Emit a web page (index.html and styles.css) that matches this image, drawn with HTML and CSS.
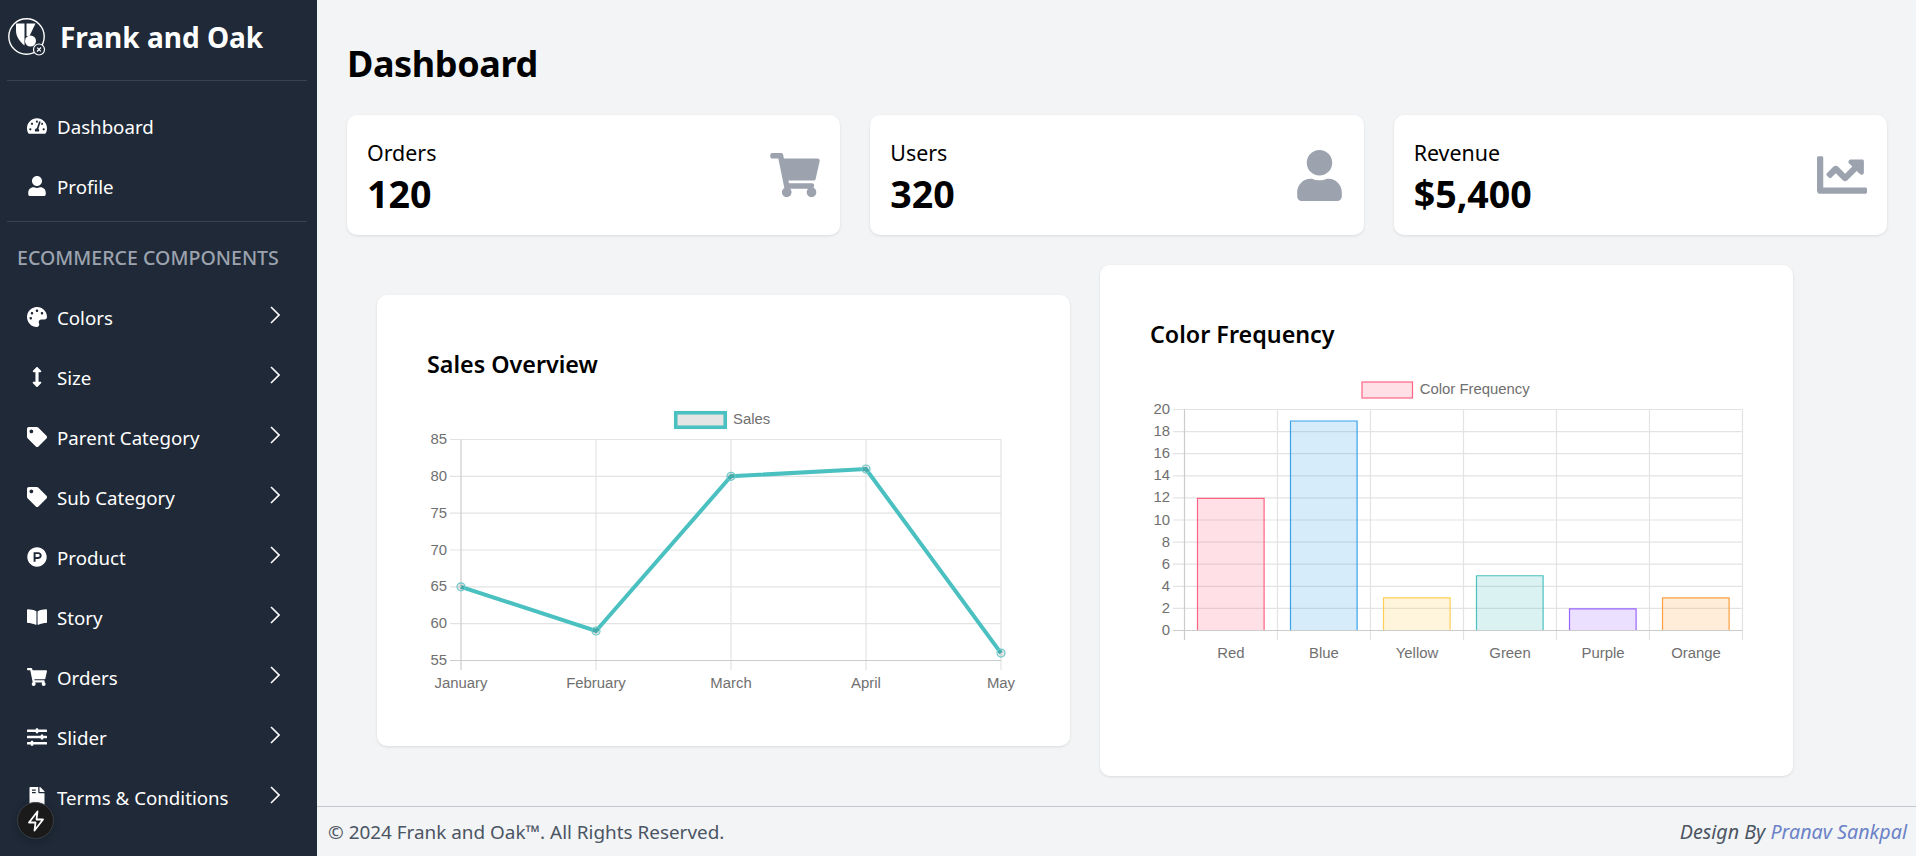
FILE: index.html
```html
<!DOCTYPE html>
<html lang="en">
<head>
    <meta charset="UTF-8">
    <meta name="viewport" content="width=device-width, initial-scale=1.0">
    <title>Frank and Oak Dashboard</title>
    <link rel="stylesheet" href="styles.css">
</head>
<body>
    <aside class="sidebar">
        <div class="brand">
            <svg class="brand-logo" viewBox="0 0 40 40">
                <circle cx="18.500" cy="19.500" r="17.700" fill="none" stroke="#fff" stroke-width="1.4"/>
                <path d="M8 6.500h8.500v22c-5-4-8.500-9-8.500-15z" fill="#fff"/>
                <path d="M18.500 6.500h9l-6 12.500h-3z" fill="#fff"/>
                <circle cx="22.500" cy="24" r="5.500" fill="#fff"/>
                <circle cx="31" cy="32.500" r="5.500" fill="#1f2937" stroke="#fff" stroke-width="1.200"/>
                <path d="M29 34.500l4-4M29.200 30.700l3.600 3.600" stroke="#fff" stroke-width="1.200"/>
            </svg>
            <span class="brand-name">Frank and Oak</span>
        </div>
        <hr class="side-rule">
        <nav class="nav-top">
            <a class="nav-item">
                <span class="nav-icon"><svg viewBox="0 0 576 512"><path d="M288 32C128.94 32 0 160.94 0 320c0 52.8 14.25 102.26 39.06 144.8 5.61 9.62 16.3 15.2 27.44 15.2h443c11.14 0 21.83-5.58 27.44-15.2C561.75 422.26 576 372.8 576 320c0-159.06-128.94-288-288-288zm0 64c14.71 0 26.58 10.13 30.32 23.65-1.11 2.26-2.64 4.23-3.45 6.67l-9.22 27.67c-5.13 3.49-10.97 6.01-17.64 6.01-17.67 0-32-14.33-32-32S270.33 96 288 96zM96 384c-17.67 0-32-14.33-32-32s14.33-32 32-32 32 14.33 32 32-14.33 32-32 32zm48-160c-17.67 0-32-14.33-32-32s14.33-32 32-32 32 14.33 32 32-14.33 32-32 32zm246.77-72.41l-61.33 184C343.13 347.33 352 364.54 352 384c0 11.72-3.38 22.55-8.88 32H232.88c-5.5-9.45-8.88-20.28-8.88-32 0-33.94 26.5-61.43 59.9-63.59l61.34-184.01c4.17-12.56 17.73-19.45 30.36-15.17 12.57 4.19 19.35 17.77 15.17 30.36zm14.66 57.2l15.52-46.55c3.47-1.29 7.13-2.23 11.05-2.23 17.67 0 32 14.33 32 32s-14.33 32-32 32c-11.38-.01-20.89-6.28-26.57-15.22zM480 384c-17.67 0-32-14.33-32-32s14.33-32 32-32 32 14.33 32 32-14.33 32-32 32z"/></svg></span>
                Dashboard
            </a>
            <a class="nav-item">
                <span class="nav-icon"><svg viewBox="0 0 448 512"><path d="M224 256c70.7 0 128-57.3 128-128S294.7 0 224 0 96 57.3 96 128s57.3 128 128 128zm89.6 32h-16.7c-22.2 10.2-46.9 16-72.9 16s-50.6-5.8-72.9-16h-16.7C60.2 288 0 348.2 0 422.4V464c0 26.5 21.5 48 48 48h352c26.5 0 48-21.5 48-48v-41.6c0-74.2-60.2-134.4-134.4-134.4z"/></svg></span>
                Profile
            </a>
        </nav>
        <hr class="side-rule">
        <div class="nav-heading">ECOMMERCE COMPONENTS</div>
        <nav>
            <a class="nav-item">
                <span class="nav-icon"><svg viewBox="0 0 512 512"><path d="M204.3 5C104.9 24.4 24.8 104.3 5.2 203.4c-37 187 131.7 326.4 258.8 306.7 41.2-6.4 61.4-54.6 42.5-91.7-23.1-45.4 9.9-98.4 60.9-98.4h79.7c35.8 0 64.8-29.6 64.9-65.3C511.5 97.1 368.1-26.9 204.3 5zM96 320c-17.7 0-32-14.3-32-32s14.3-32 32-32 32 14.3 32 32-14.3 32-32 32zm32-128c-17.7 0-32-14.3-32-32s14.3-32 32-32 32 14.3 32 32-14.3 32-32 32zm128-64c-17.7 0-32-14.3-32-32s14.3-32 32-32 32 14.3 32 32-14.3 32-32 32zm128 64c-17.7 0-32-14.3-32-32s14.3-32 32-32 32 14.3 32 32-14.3 32-32 32z"/></svg></span>
                Colors
                <svg class="nav-chevron" viewBox="0 0 10 18"><path d="M1 1l8 8-8 8"/></svg>
            </a>
            <a class="nav-item">
                <span class="nav-icon"><svg viewBox="0 0 256 512"><path d="M214.059 377.941H168V134.059h46.059c21.382 0 32.09-25.851 16.971-40.971L144.971 7.029c-9.373-9.373-24.568-9.373-33.941 0L24.971 93.088c-15.119 15.119-4.411 40.971 16.971 40.971H88v243.882H41.941c-21.382 0-32.09 25.851-16.971 40.971l86.059 86.059c9.373 9.373 24.568 9.373 33.941 0l86.059-86.059c15.12-15.119 4.412-40.971-16.97-40.971z"/></svg></span>
                Size
                <svg class="nav-chevron" viewBox="0 0 10 18"><path d="M1 1l8 8-8 8"/></svg>
            </a>
            <a class="nav-item">
                <span class="nav-icon"><svg viewBox="0 0 512 512"><path d="M0 252.118V48C0 21.49 21.49 0 48 0h204.118a48 48 0 0 1 33.941 14.059l211.882 211.882c18.745 18.745 18.745 49.137 0 67.882L293.823 497.941c-18.745 18.745-49.137 18.745-67.882 0L14.059 286.059A48 48 0 0 1 0 252.118zM112 64c-26.51 0-48 21.49-48 48s21.49 48 48 48 48-21.49 48-48-21.49-48-48-48z"/></svg></span>
                Parent Category
                <svg class="nav-chevron" viewBox="0 0 10 18"><path d="M1 1l8 8-8 8"/></svg>
            </a>
            <a class="nav-item">
                <span class="nav-icon"><svg viewBox="0 0 512 512"><path d="M0 252.118V48C0 21.49 21.49 0 48 0h204.118a48 48 0 0 1 33.941 14.059l211.882 211.882c18.745 18.745 18.745 49.137 0 67.882L293.823 497.941c-18.745 18.745-49.137 18.745-67.882 0L14.059 286.059A48 48 0 0 1 0 252.118zM112 64c-26.51 0-48 21.49-48 48s21.49 48 48 48 48-21.49 48-48-21.49-48-48-48z"/></svg></span>
                Sub Category
                <svg class="nav-chevron" viewBox="0 0 10 18"><path d="M1 1l8 8-8 8"/></svg>
            </a>
            <a class="nav-item">
                <span class="nav-icon"><svg viewBox="0 0 512 512"><path d="M326.3 218.8c0 20.5-16.7 37.2-37.2 37.2h-70.3v-74.4h70.3c20.5 0 37.2 16.7 37.2 37.2zM504 256c0 137-111 248-248 248S8 393 8 256 119 8 256 8s248 111 248 248zm-128.1-37.2c0-47.9-38.9-86.8-86.8-86.8H169.2v248h49.6v-74.4h70.3c47.9 0 86.8-38.9 86.8-86.8z"/></svg></span>
                Product
                <svg class="nav-chevron" viewBox="0 0 10 18"><path d="M1 1l8 8-8 8"/></svg>
            </a>
            <a class="nav-item">
                <span class="nav-icon"><svg viewBox="0 0 576 512"><path d="M542.22 32.05c-54.8 3.11-163.72 14.43-230.96 55.59-4.64 2.84-7.27 7.89-7.27 13.17v363.87c0 11.55 12.63 18.85 23.28 13.49 69.18-34.82 169.23-44.32 218.7-46.92 16.89-.89 30.02-14.43 30.02-30.66V62.75c.01-17.71-15.35-31.74-33.77-30.7zM264.73 87.64C197.5 46.48 88.58 35.17 33.78 32.05 15.36 31.01 0 45.04 0 62.75V400.6c0 16.24 13.13 29.78 30.02 30.66 49.49 2.6 149.59 12.11 218.77 46.95 10.62 5.35 23.21-1.94 23.21-13.46V100.63c0-5.29-2.62-10.14-7.27-12.99z"/></svg></span>
                Story
                <svg class="nav-chevron" viewBox="0 0 10 18"><path d="M1 1l8 8-8 8"/></svg>
            </a>
            <a class="nav-item">
                <span class="nav-icon"><svg viewBox="0 0 576 512"><path d="M528.12 301.319l47.273-208C578.806 78.301 567.391 64 551.99 64H159.208l-9.166-44.81C147.758 8.021 137.93 0 126.529 0H24C10.745 0 0 10.745 0 24v16c0 13.255 10.745 24 24 24h69.883l70.248 343.435C147.325 417.1 136 435.222 136 456c0 30.928 25.072 56 56 56s56-25.072 56-56c0-15.674-6.447-29.835-16.824-40h209.647C430.447 426.165 424 440.326 424 456c0 30.928 25.072 56 56 56s56-25.072 56-56c0-22.172-12.888-41.332-31.579-50.405l5.517-24.276c3.413-15.018-8.002-29.319-23.403-29.319H218.117l-6.545-32h293.145c11.206 0 20.92-7.754 23.403-18.681z"/></svg></span>
                Orders
                <svg class="nav-chevron" viewBox="0 0 10 18"><path d="M1 1l8 8-8 8"/></svg>
            </a>
            <a class="nav-item">
                <span class="nav-icon"><svg viewBox="0 0 512 512"><path d="M496 384H160v-16c0-8.8-7.2-16-16-16h-32c-8.8 0-16 7.2-16 16v16H16c-8.8 0-16 7.2-16 16v32c0 8.8 7.2 16 16 16h80v16c0 8.8 7.2 16 16 16h32c8.8 0 16-7.2 16-16v-16h336c8.8 0 16-7.2 16-16v-32c0-8.8-7.2-16-16-16zm0-160h-80v-16c0-8.8-7.2-16-16-16h-32c-8.8 0-16 7.2-16 16v16H16c-8.8 0-16 7.2-16 16v32c0 8.8 7.2 16 16 16h336v16c0 8.8 7.2 16 16 16h32c8.8 0 16-7.2 16-16v-16h80c8.8 0 16-7.2 16-16v-32c0-8.8-7.2-16-16-16zm0-160H288V48c0-8.8-7.2-16-16-16h-32c-8.8 0-16 7.2-16 16v16H16C7.2 64 0 71.2 0 80v32c0 8.8 7.2 16 16 16h208v16c0 8.8 7.2 16 16 16h32c8.8 0 16-7.2 16-16v-16h208c8.8 0 16-7.2 16-16V80c0-8.8-7.2-16-16-16z"/></svg></span>
                Slider
                <svg class="nav-chevron" viewBox="0 0 10 18"><path d="M1 1l8 8-8 8"/></svg>
            </a>
            <a class="nav-item">
                <span class="nav-icon"><svg viewBox="0 0 384 512"><path d="M224 136V0H24C10.7 0 0 10.7 0 24v464c0 13.3 10.7 24 24 24h336c13.3 0 24-10.7 24-24V160H248c-13.2 0-24-10.8-24-24zM64 72c0-4.42 3.58-8 8-8h80c4.42 0 8 3.58 8 8v16c0 4.42-3.58 8-8 8H72c-4.42 0-8-3.58-8-8V72zm0 64c0-4.42 3.58-8 8-8h80c4.42 0 8 3.58 8 8v16c0 4.42-3.58 8-8 8H72c-4.42 0-8-3.58-8-8v-16zM377 105L279.1 7c-4.5-4.5-10.6-7-17-7H256v128h128v-6.1c0-6.3-2.5-12.4-7-16.9z"/></svg></span>
                Terms &amp; Conditions
                <svg class="nav-chevron" viewBox="0 0 10 18"><path d="M1 1l8 8-8 8"/></svg>
            </a>
        </nav>
    </aside>

    <div class="main">
        <main class="content">
            <h1 class="page-title">Dashboard</h1>

            <section class="stats">
                <div class="stat-card">
                    <div>
                        <div class="stat-label">Orders</div>
                        <div class="stat-value">120</div>
                    </div>
                    <svg class="stat-icon icon-cart" viewBox="0 0 576 512"><path d="M528.12 301.319l47.273-208C578.806 78.301 567.391 64 551.99 64H159.208l-9.166-44.81C147.758 8.021 137.93 0 126.529 0H24C10.745 0 0 10.745 0 24v16c0 13.255 10.745 24 24 24h69.883l70.248 343.435C147.325 417.1 136 435.222 136 456c0 30.928 25.072 56 56 56s56-25.072 56-56c0-15.674-6.447-29.835-16.824-40h209.647C430.447 426.165 424 440.326 424 456c0 30.928 25.072 56 56 56s56-25.072 56-56c0-22.172-12.888-41.332-31.579-50.405l5.517-24.276c3.413-15.018-8.002-29.319-23.403-29.319H218.117l-6.545-32h293.145c11.206 0 20.92-7.754 23.403-18.681z"/></svg>
                </div>
                <div class="stat-card">
                    <div>
                        <div class="stat-label">Users</div>
                        <div class="stat-value">320</div>
                    </div>
                    <svg class="stat-icon icon-user" viewBox="0 0 448 512"><path d="M224 256c70.7 0 128-57.3 128-128S294.7 0 224 0 96 57.3 96 128s57.3 128 128 128zm89.6 32h-16.7c-22.2 10.2-46.9 16-72.9 16s-50.6-5.8-72.9-16h-16.7C60.2 288 0 348.2 0 422.4V464c0 26.5 21.5 48 48 48h352c26.5 0 48-21.5 48-48v-41.6c0-74.2-60.2-134.4-134.4-134.4z"/></svg>
                </div>
                <div class="stat-card">
                    <div>
                        <div class="stat-label">Revenue</div>
                        <div class="stat-value">$5,400</div>
                    </div>
                    <svg class="stat-icon icon-chart" viewBox="0 0 512 512"><path d="M496 384H64V80c0-8.84-7.16-16-16-16H16C7.16 64 0 71.16 0 80v336c0 17.67 14.33 32 32 32h464c8.84 0 16-7.16 16-16v-32c0-8.84-7.16-16-16-16zM464 96H345.94c-21.38 0-32.09 25.85-16.97 40.97l32.4 32.4L288 242.75l-73.37-73.37c-12.5-12.5-32.76-12.5-45.25 0l-68.69 68.69c-6.25 6.25-6.25 16.38 0 22.63l22.62 22.62c6.25 6.25 16.38 6.25 22.63 0L192 237.25l73.37 73.37c12.5 12.5 32.76 12.5 45.25 0l96-96 32.4 32.4c15.12 15.12 40.97 4.41 40.97-16.97V112c.01-8.84-7.15-16-15.99-16z"/></svg>
                </div>
            </section>

            <section class="charts">
                <div class="chart-card">
                    <h2 class="chart-title">Sales Overview</h2>
                    <svg class="chart chart-sales" viewBox="0 0 593 301">
                        <rect x="248.75" y="17.75" width="49.5" height="14.5" fill="#e5e5e5" stroke="#4bc0c0" stroke-width="3.6"/>
                        <text x="306" y="29">Sales</text>

                        <path class="grid" d="M23 44.5H574M23 81.3H574M23 118.2H574M23 155H574M23 191.8H574M23 228.7H574M169 44.5V275M304 44.5V275M439 44.5V275M574 44.5V275"/>
                        <path class="axis" d="M23 265.5H574M34 44.5V275"/>

                        <g class="y-labels">
                            <text x="20" y="49">85</text>
                            <text x="20" y="85.8">80</text>
                            <text x="20" y="122.700">75</text>
                            <text x="20" y="159.500">70</text>
                            <text x="20" y="196.300">65</text>
                            <text x="20" y="233.200">60</text>
                            <text x="20" y="270">55</text>
                        </g>
                        <g class="x-labels">
                            <text x="34" y="293">January</text>
                            <text x="169" y="293">February</text>
                            <text x="304" y="293">March</text>
                            <text x="439" y="293">April</text>
                            <text x="574" y="293">May</text>
                        </g>

                        <polyline points="34,191.8 169,236 304,81.3 439,74 574,258.1" fill="none" stroke="#4bc0c0" stroke-width="4"/>
                        <g class="points">
                            <circle cx="34" cy="191.8" r="4"/>
                            <circle cx="169" cy="236" r="4"/>
                            <circle cx="304" cy="81.3" r="4"/>
                            <circle cx="439" cy="74" r="4"/>
                            <circle cx="574" cy="258.1" r="4"/>
                        </g>
                    </svg>
                </div>

                <div class="chart-card">
                    <h2 class="chart-title">Color Frequency</h2>
                    <svg class="chart chart-colors" viewBox="0 0 593 361">
                        <rect x="212" y="17" width="50.5" height="16" fill="#ffe0e6" stroke="#ff6384" stroke-width="1.2"/>
                        <text x="269.7" y="29">Color Frequency</text>

                        <path class="grid" d="M23 44.5H592.5M23 66.6H592.5M23 88.7H592.5M23 110.8H592.5M23 132.9H592.5M23 155H592.5M23 177.1H592.5M23 199.2H592.5M23 221.3H592.5M23 243.4H592.5M127.5 44.5V275M220.5 44.5V275M313.5 44.5V275M406.5 44.5V275M499.5 44.5V275M592.5 44.5V275"/>

                        <rect x="47.5" y="133.4" width="66.6" height="132.1" fill="rgba(255,99,132,.2)"/>
                        <path d="M47.5 265.5V133.4H114.1V265.5" fill="none" stroke="#ff6384" stroke-width="1.2"/>
                        <rect x="140.5" y="56" width="66.6" height="209.5" fill="rgba(54,162,235,.2)"/>
                        <path d="M140.5 265.5V56H207.1V265.5" fill="none" stroke="#36a2eb" stroke-width="1.2"/>
                        <rect x="233.5" y="232.85" width="66.6" height="32.65" fill="rgba(255,206,86,.2)"/>
                        <path d="M233.5 265.5V232.85H300.1V265.5" fill="none" stroke="#ffce56" stroke-width="1.2"/>
                        <rect x="326.5" y="210.75" width="66.6" height="54.75" fill="rgba(75,192,192,.2)"/>
                        <path d="M326.5 265.5V210.75H393.1V265.5" fill="none" stroke="#4bc0c0" stroke-width="1.2"/>
                        <rect x="419.5" y="243.9" width="66.6" height="21.6" fill="rgba(153,102,255,.2)"/>
                        <path d="M419.5 265.5V243.9H486.1V265.5" fill="none" stroke="#9966ff" stroke-width="1.2"/>
                        <rect x="512.5" y="232.85" width="66.6" height="32.65" fill="rgba(255,159,64,.2)"/>
                        <path d="M512.5 265.5V232.85H579.1V265.5" fill="none" stroke="#ff9f40" stroke-width="1.2"/>

                        <path class="axis" d="M23 265.5H592.5M34.5 44.5V275"/>

                        <g class="y-labels">
                            <text x="20" y="49">20</text>
                            <text x="20" y="71.1">18</text>
                            <text x="20" y="93.2">16</text>
                            <text x="20" y="115.3">14</text>
                            <text x="20" y="137.4">12</text>
                            <text x="20" y="159.500">10</text>
                            <text x="20" y="181.6">8</text>
                            <text x="20" y="203.7">6</text>
                            <text x="20" y="225.8">4</text>
                            <text x="20" y="247.9">2</text>
                            <text x="20" y="270">0</text>
                        </g>
                        <g class="x-labels">
                            <text x="81" y="293">Red</text>
                            <text x="174" y="293">Blue</text>
                            <text x="267" y="293">Yellow</text>
                            <text x="360" y="293">Green</text>
                            <text x="453" y="293">Purple</text>
                            <text x="546" y="293">Orange</text>
                        </g>
                    </svg>
                </div>
            </section>
        </main>

        <footer class="footer">
            <span>© 2024 Frank and Oak™. All Rights Reserved.</span>
            <span class="credit">Design By <a class="credit-link">Pranav Sankpal</a></span>
        </footer>
    </div>

    <div class="dev-badge">
        <svg viewBox="0 0 24 24"><path d="M13.5 2.5L5 13.5h6.5l-1 8 8.500-11H12.500z"/></svg>
    </div>
</body>
</html>
```

FILE: styles.css
```css
* {
    box-sizing: border-box;
}
html, body {
    height: 100%;
}
body {
    margin: 0;
    display: flex;
    overflow: hidden;
    background-color: #f3f4f6;
    color: #000;
    font-family: "Noto Sans", "Open Sans", sans-serif;
}

/* sidebar */
.sidebar {
    width: 317px;
    flex-shrink: 0;
    height: 100vh;
    overflow: hidden;
    background-color: #1f2937;
    color: #fff;
}
.brand {
    height: 80px;
    display: flex;
    align-items: center;
    padding: 0 0 7px 8px;
}
.brand-logo {
    width: 40px;
    height: 40px;
    margin-right: 12px;
}
.brand-name {
    font-size: 28px;
    font-weight: 700;
}
.side-rule {
    margin: 0 10px 0 7px;
    border: 0;
    border-top: 1px solid #374151;
}
.nav-top {
    padding-top: 16px;
    padding-bottom: 4px;
}
.nav-heading {
    height: 66px;
    padding-left: 17px;
    line-height: 72px;
    font-size: 19.6px;
    font-weight: 500;
    color: #9ca3af;
    white-space: nowrap;
}
.nav-item {
    position: relative;
    display: flex;
    align-items: center;
    height: 60px;
    padding: 0 0 2px 27px;
    font-size: 18.7px;
    white-space: nowrap;
}
.nav-icon {
    width: 20px;
    height: 20px;
    margin-right: 10px;
    display: flex;
    align-items: center;
    justify-content: center;
}
.nav-icon svg {
    width: 20px;
    height: 20px;
    fill: #fff;
}
.nav-chevron {
    position: absolute;
    left: 270px;
    top: 18px;
    width: 10px;
    height: 18px;
    fill: none;
    stroke: #fff;
    stroke-width: 1.6;
}

/* main column */
.main {
    flex: 1;
    min-width: 0;
    height: 100vh;
    display: flex;
    flex-direction: column;
}
.content {
    flex: 1;
    min-height: 0;
    padding: 30px 29px 0 30px;
}
.page-title {
    margin: 0 0 17px;
    font-size: 36px;
    line-height: 68px;
    font-weight: 700;
    letter-spacing: -0.4px;
}
.stats {
    display: grid;
    grid-template-columns: repeat(3, 1fr);
    gap: 30px;
}
.stat-card {
    height: 120px;
    padding: 0 20px;
    display: flex;
    align-items: center;
    justify-content: space-between;
    background-color: #fff;
    border-radius: 10px;
    box-shadow: 0 1px 3px rgba(0, 0, 0, 0.1);
}
.stat-label {
    font-size: 21.4px;
    line-height: 30px;
    margin-top: 8px;
}
.stat-value {
    font-size: 37.6px;
    line-height: 52px;
    font-weight: 700;
}
.stat-icon {
    fill: #9ca3af;
}
.icon-cart {
    width: 50px;
    height: 44px;
}
.icon-user {
    width: 45px;
    height: 51px;
    margin-right: 2px;
}
.icon-chart {
    width: 50px;
    height: 50px;
}

/* charts */
.charts {
    display: flex;
    align-items: center;
    gap: 30px;
    padding: 30px;
}
.chart-card {
    width: 693px;
    flex-shrink: 0;
    padding: 50px;
    background-color: #fff;
    border-radius: 10px;
    box-shadow: 0 1px 3px rgba(0, 0, 0, 0.1);
}
.chart-title {
    margin: 0 0 12px;
    font-size: 23.3px;
    line-height: 38px;
    font-weight: 600;
}
.chart {
    display: block;
    width: 593px;
    overflow: visible;
}
.chart-sales {
    height: 301px;
}
.chart-colors {
    height: 361px;
}
.chart text {
    font-family: "Liberation Sans", Arial, sans-serif;
    font-size: 14.9px;
    fill: #707070;
}
.chart .y-labels text {
    text-anchor: end;
}
.chart .x-labels text {
    text-anchor: middle;
}
.grid {
    fill: none;
    stroke: #e3e3e3;
    stroke-width: 1.2;
}
.axis {
    fill: none;
    stroke: #cccccc;
    stroke-width: 1.2;
}
.points circle {
    fill: rgba(0, 0, 0, 0.1);
    stroke: #6ccaca;
    stroke-width: 1.2;
}

/* footer */
.footer {
    height: 50px;
    flex-shrink: 0;
    padding: 0 9px 0 11px;
    display: flex;
    align-items: center;
    justify-content: space-between;
    border-top: 1px solid #c3c6cc;
    font-size: 18.9px;
    color: #4b5563;
}
.credit {
    font-size: 19.7px;
    font-style: italic;
}
.credit-link {
    color: #6b82c7;
}

/* next dev tools button */
.dev-badge {
    position: fixed;
    left: 17px;
    top: 802px;
    width: 37px;
    height: 37px;
    display: flex;
    align-items: center;
    justify-content: center;
    border-radius: 50%;
    background-color: #1a1a1a;
    border: 1px solid #3b3f46;
    box-shadow: 0 2px 8px rgba(0, 0, 0, 0.2);
}
.dev-badge svg {
    width: 24px;
    height: 24px;
    fill: none;
    stroke: #fff;
    stroke-width: 1.8;
    stroke-linejoin: round;
}
```
